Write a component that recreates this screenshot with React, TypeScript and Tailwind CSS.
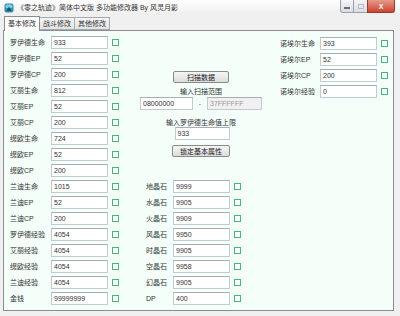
import React from "react"

const leftRows: [string, string][] = [
  ["罗伊德生命", "933"],
  ["罗伊德EP", "52"],
  ["罗伊德CP", "200"],
  ["艾丽生命", "812"],
  ["艾丽EP", "52"],
  ["艾丽CP", "200"],
  ["缇欧生命", "724"],
  ["缇欧EP", "52"],
  ["缇欧CP", "200"],
  ["兰迪生命", "1015"],
  ["兰迪EP", "52"],
  ["兰迪CP", "200"],
  ["罗伊德经验", "4054"],
  ["艾丽经验", "4054"],
  ["缇欧经验", "4054"],
  ["兰迪经验", "4054"],
  ["金钱", "99999999"],
]

const stoneRows: [string, string][] = [
  ["地晶石", "9999"],
  ["水晶石", "9905"],
  ["火晶石", "9909"],
  ["风晶石", "9950"],
  ["时晶石", "9905"],
  ["空晶石", "9958"],
  ["幻晶石", "9905"],
  ["DP", "400"],
]

const rightRows: [string, string][] = [
  ["诺埃尔生命", "393"],
  ["诺埃尔EP", "52"],
  ["诺埃尔CP", "200"],
  ["诺埃尔经验", "0"],
]

function Box({ value, width, disabled }: { value: string; width: string; disabled?: boolean }) {
  return (
    <div
      className={`h-[13px] ${width} border border-[#c5c9d0] border-t-[#a9adb5] flex items-center pl-[2px] ${
        disabled ? "bg-[#f0f0f0] text-[#9a9a9a]" : "bg-white text-[#333]"
      }`}
    >
      {value}
    </div>
  )
}

function Check() {
  return <div className="w-[7px] h-[7px] border border-[#43b97a] bg-white ml-[4px]" />
}

function Row({ label, value, labelW }: { label: string; value: string; labelW: string }) {
  return (
    <div className="h-[16px] flex items-center">
      <span className={`${labelW} whitespace-nowrap text-[#333]`}>{label}</span>
      <Box value={value} width="w-[57px]" />
      <Check />
    </div>
  )
}

function Btn({ children, width }: { children: React.ReactNode; width: string }) {
  return (
    <div
      className={`${width} h-[12px] mx-auto flex items-center justify-center rounded-[2px] border border-[#8a8a8a] bg-gradient-to-b from-[#f6f6f6] to-[#dcdcdc] text-[#222]`}
    >
      {children}
    </div>
  )
}

export default function App() {
  return (
    <div
      className="w-[400px] h-[316px] bg-[#f0f0f0] flex flex-col text-[7px] leading-none overflow-hidden"
      style={{ fontFamily: '"Liberation Sans", "Noto Sans CJK SC", sans-serif' }}
    >
      {/* title bar */}
      <div className="h-[15px] flex items-start bg-gradient-to-b from-white to-[#eeeeee]">
        <svg width="10" height="10" viewBox="0 0 10 10" className="ml-[4px] mt-[3px]">
          <rect x="0.5" y="0.5" width="9" height="9" rx="2" fill="#2f8fb0" />
          <rect x="1.5" y="1.5" width="7" height="3.5" rx="1.5" fill="#7fd0e6" />
          <path d="M2.5 8 L5 3.5 L7.5 8 Z" fill="#1c4f66" />
        </svg>
        <span className="ml-[3px] mt-[4px] text-[#333] whitespace-nowrap">《零之轨迹》简体中文版 多功能修改器 By 风灵月影</span>
        <div className="ml-auto mr-[5px] flex h-[13px]">
          <div className="w-[14px] border border-[#9aa3ad] border-t-0 rounded-bl-[3px] bg-gradient-to-b from-[#f4f6f8] to-[#d9dde2] flex items-center justify-center">
            <div className="w-[6px] h-[2px] bg-[#6b6f75] mt-[3px]" />
          </div>
          <div className="w-[13px] border-b border-[#9aa3ad] bg-gradient-to-b from-[#f4f6f8] to-[#d9dde2] flex items-center justify-center">
            <div className="w-[6px] h-[5px] border border-[#b9bdc2]" />
          </div>
          <div className="w-[28px] border border-[#9a3a2c] border-t-0 rounded-br-[3px] bg-gradient-to-b from-[#e7988a] to-[#c9432c] flex items-center justify-center text-white font-bold text-[7px]">
            X
          </div>
        </div>
      </div>

      {/* tabs */}
      <div className="h-[15px] flex items-end pl-[4px] relative z-10">
        <div className="h-[15px] w-[36px] border border-[#898c95] border-b-0 bg-white flex items-center justify-center text-[#333] -mb-px pb-px">
          基本修改
        </div>
        <div className="h-[13px] w-[35px] border border-[#a5a9b0] border-l-0 bg-gradient-to-b from-[#f5f5f5] to-[#e3e3e3] flex items-center justify-center text-[#333]">
          战斗修改
        </div>
        <div className="h-[13px] w-[35px] border border-[#a5a9b0] border-l-0 bg-gradient-to-b from-[#f5f5f5] to-[#e3e3e3] flex items-center justify-center text-[#333]">
          其他修改
        </div>
      </div>

      {/* panel */}
      <div className="ml-[3px] w-[391px] h-[281px] border border-[#898c95] bg-[#f5fffa] flex pt-[3px]">
        <div className="w-[136px] pl-[6px] flex flex-col">
          {leftRows.map(([l, v]) => (
            <Row key={l} label={l} value={v} labelW="w-[41px]" />
          ))}
        </div>

        <div className="w-[122px] flex flex-col">
          <div className="h-[144px] flex flex-col">
            <div className="mt-[37px]">
              <Btn width="w-[56px]">扫描数据</Btn>
            </div>
            <div className="mt-[5px] h-[8px] text-center text-[#333]">输入扫描范围</div>
            <div className="mt-[1px] flex items-center">
              <Box value="08000000" width="w-[53px]" />
              <span className="w-[14px] text-center text-[#666]">-</span>
              <Box value="37FFFFFF" width="w-[55px]" disabled />
            </div>
            <div className="mt-[9px] h-[8px] text-center text-[#333]">输入罗伊德生命值上限</div>
            <div className="flex justify-center pl-[2px]">
              <Box value="933" width="w-[55px]" />
            </div>
            <div className="mt-[5px]">
              <Btn width="w-[58px]">锁定基本属性</Btn>
            </div>
          </div>
          <div className="pl-[6px] flex flex-col">
            {stoneRows.map(([l, v]) => (
              <Row key={l} label={l} value={v} labelW="w-[27px]" />
            ))}
          </div>
        </div>

        <div className="ml-[18px] flex flex-col pt-[1px]">
          {rightRows.map(([l, v]) => (
            <Row key={l} label={l} value={v} labelW="w-[40px]" />
          ))}
        </div>
      </div>
    </div>
  )
}
